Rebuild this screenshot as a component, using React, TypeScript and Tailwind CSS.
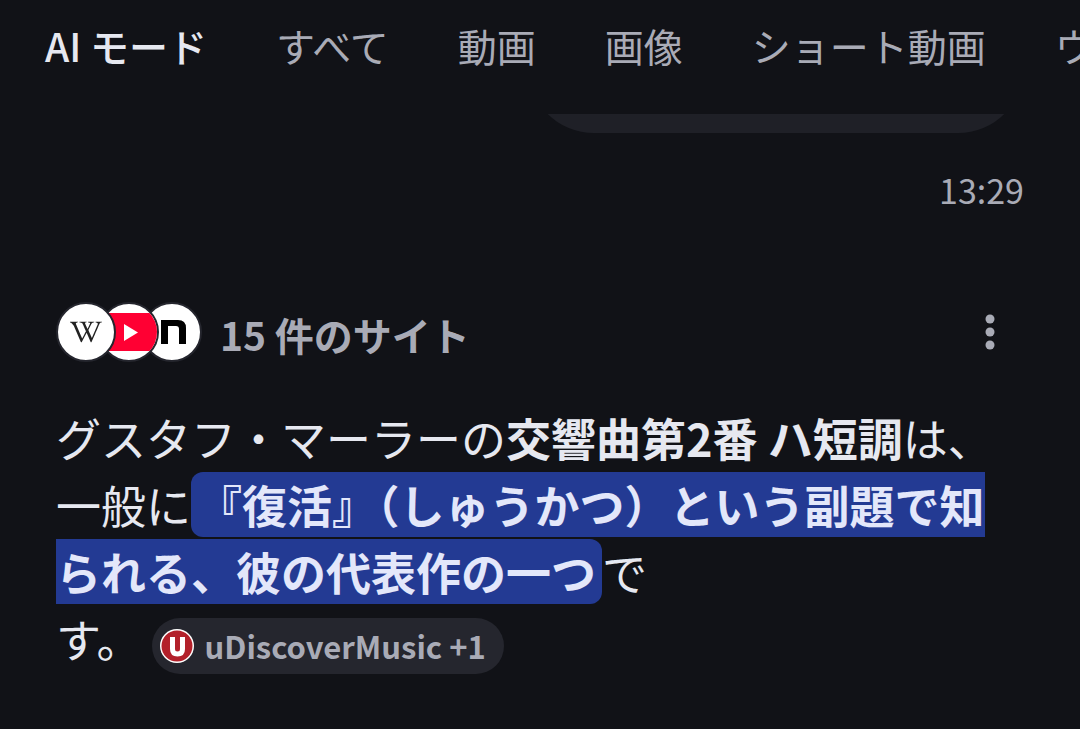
import { FaWikipediaW } from "react-icons/fa";

const tabs = ["AI モード", "すべて", "動画", "画像", "ショート動画", "ウェブ"];

function Tabs() {
  return (
    <nav className="h-[114px] overflow-hidden pl-[45px]">
      <div className="flex h-[90px] items-center gap-[69px]">
        {tabs.map((t, i) => (
          <a
            key={t}
            href="#"
            aria-current={i === 0 ? "page" : undefined}
            className={
              i === 0
                ? "shrink-0 whitespace-nowrap text-[39px] font-medium text-[#e6e8f0]"
                : "shrink-0 whitespace-nowrap text-[39px] text-[#a9abb6]"
            }
          >
            {t}
          </a>
        ))}
      </div>
    </nav>
  );
}

function SiteIcons() {
  return (
    <span className="flex -space-x-[17px]">
      <span className="z-20 flex size-[60px] items-center justify-center rounded-full border-2 border-[#25262e] bg-white text-[#222]">
        <FaWikipediaW size={32} />
      </span>
      <span className="z-10 size-[60px] overflow-hidden rounded-full border-2 border-[#25262e] bg-white">
        <svg viewBox="0 0 56 56" className="size-full" aria-hidden="true">
          <path d="M-1 9h53q3 3 4 10v18q-1 7-4 10H-1z" fill="#ff0033" />
          <path d="M23 20v17l14-8.500z" fill="#fff" />
        </svg>
      </span>
      <span className="size-[60px] overflow-hidden rounded-full border-2 border-[#25262e] bg-white">
        <svg viewBox="0 0 56 56" className="size-full" aria-hidden="true">
          <path d="M17 40V16h17q8 0 8 8v16h-7V25q0-3-3-3h-8v18z" fill="#000" />
        </svg>
      </span>
    </span>
  );
}

function SourceChip() {
  return (
    <button
      type="button"
      className="ml-[10px] inline-flex h-[56px] items-center gap-[11px] rounded-full bg-[#25262e] pl-[8px] pr-[18px] align-middle text-[31px] font-bold text-[#a9abb6]"
    >
      <svg viewBox="0 0 34 34" className="size-[34px]" aria-hidden="true">
        <circle cx="17" cy="17" r="17" fill="#fff" />
        <circle cx="17" cy="17" r="15.500" fill="#b3202a" />
        <path d="M12.500 8v12q0 5 5 5t5-5V8" fill="none" stroke="#fff" strokeWidth="5" />
      </svg>
      uDiscoverMusic +1
    </button>
  );
}

export default function App() {
  return (
    <div className="min-h-screen overflow-hidden bg-[#111217] font-['Noto_Sans_CJK_JP',sans-serif]" lang="ja">
      <Tabs />
      <main className="px-[56px]">
        {/* end of the question bubble, scrolled under the tabs */}
        <div className="flex h-[19px] items-end justify-end overflow-hidden">
          <div className="h-[140px] w-[496px] shrink-0 rounded-[66px] bg-[#1f2027]" />
        </div>
        <time className="mt-[31px] block text-right text-[34px] leading-[52px] text-[#a9abb6]">13:29</time>

        <div className="mt-[84px] flex items-center justify-between">
          <button type="button" className="flex items-center gap-[18px] text-[39px] leading-[60px] font-bold text-[#a9abb6]">
            <SiteIcons />
            <span className="pt-1">15 件のサイト</span>
          </button>
          <button type="button" aria-label="その他" className="px-[28px] text-[#a9abb6]">
            <svg width="12" height="36" viewBox="0 0 12 36" fill="currentColor" aria-hidden="true">
              <circle cx="6" cy="5" r="4.500" />
              <circle cx="6" cy="18" r="4.500" />
              <circle cx="6" cy="31" r="4.500" />
            </svg>
          </button>
        </div>

        <p className="mt-[40px] pr-[30px] text-[45px] leading-[67px] text-[#e6e8f0]">
          グスタフ・マーラーの<strong className="font-bold">交響曲第2番 ハ短調</strong>は、一般に
          <mark className="rounded-[12px] bg-[#233a93] px-[6px] font-bold text-[#e3e7fa]">
            『復活』（しゅうかつ）という副題で知られる、彼の代表作の一つ
          </mark>
          で
          <span className="inline-block whitespace-nowrap">
            す。
            <SourceChip />
          </span>
        </p>
      </main>
    </div>
  );
}
